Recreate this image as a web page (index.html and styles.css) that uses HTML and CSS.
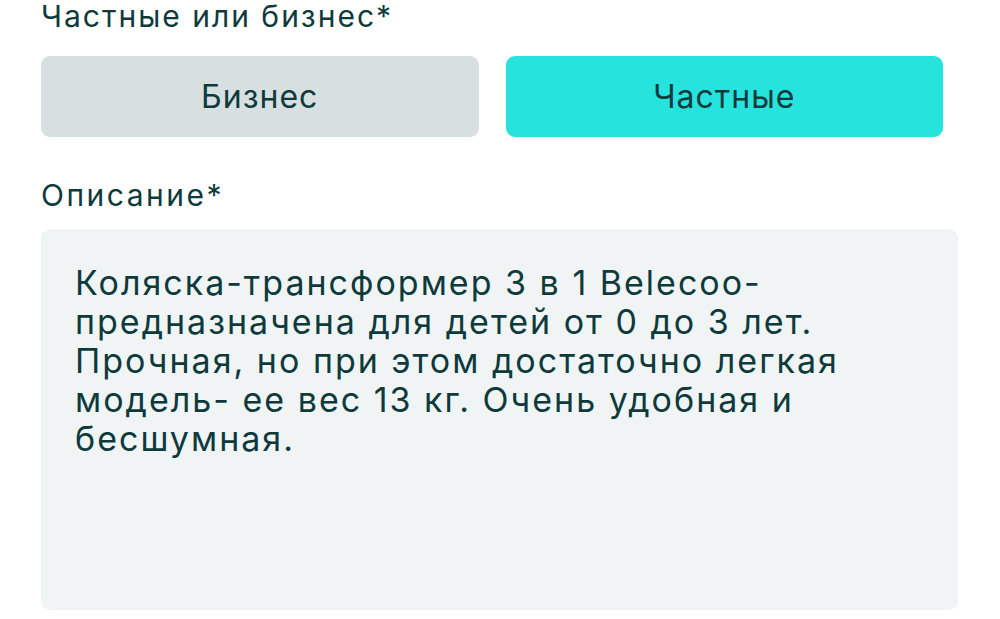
FILE: index.html
```html
<!DOCTYPE html>
<html lang="ru">
<head>
<meta charset="utf-8">
<link rel="stylesheet" href="styles.css">
</head>
<body>
<div class="form">
  <div class="label label-top">Частные или бизнес*</div>
  <div class="toggle">
    <div class="opt opt-off">Бизнес</div>
    <div class="opt opt-on">Частные</div>
  </div>
  <div class="label label-desc">Описание*</div>
  <div class="textarea">Коляска-трансформер 3 в 1 Belecoo-<br>предназначена для детей от 0 до 3 лет.<br>Прочная, но при этом достаточно легкая<br>модель- ее вес 13 кг. Очень удобная и<br>бесшумная.</div>
</div>
</body>
</html>
```
FILE: styles.css
```css
html, body {
  margin: 0;
  padding: 0;
  background: #ffffff;
}
body {
  width: 1000px;
  height: 619px;
  overflow: hidden;
  font-family: "Inter", "Noto Sans", sans-serif;
  color: #0e3a3c;
}
.form {
  padding-left: 41px;
  display: flex;
  flex-direction: column;
}
.label {
  font-size: 30px;
  line-height: 36px;
  height: 36px;
  letter-spacing: 2px;
}
.label-top {
  margin-top: -2px;
}
.label-desc {
  margin-top: 40px;
  letter-spacing: 2.5px;
}
.toggle {
  margin-top: 22px;
  width: 902px;
  display: grid;
  grid-template-columns: 1fr 1fr;
  gap: 27px;
}
.opt {
  height: 81px;
  border-radius: 9px;
  display: flex;
  align-items: center;
  justify-content: center;
  font-size: 32px;
  letter-spacing: 1px;
}
.opt-off {
  background: #d7dfe0;
}
.opt-on {
  background: #26e4dd;
}
.textarea {
  margin-top: 16px;
  width: 917px;
  height: 381px;
  box-sizing: border-box;
  background: #f0f4f5;
  border-radius: 9px;
  padding: 34px 20px 0 34px;
  font-size: 34px;
  line-height: 39px;
  letter-spacing: 2px;
}
```
